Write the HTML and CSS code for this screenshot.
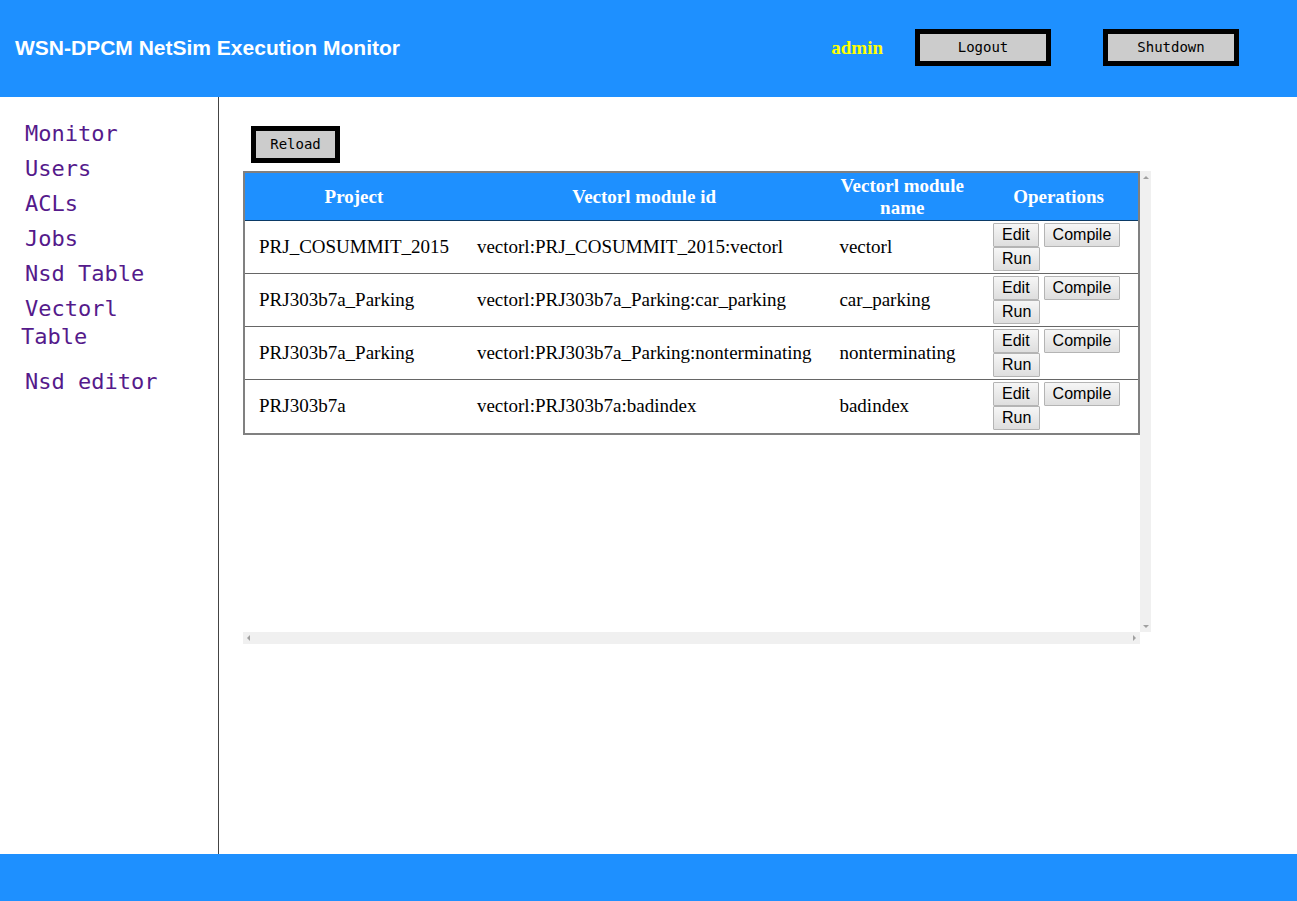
FILE: index.html
```html
<!DOCTYPE html>
<html lang="en">
<head>
<meta charset="utf-8">
<title>WSN-DPCM NetSim Execution Monitor</title>
<link rel="stylesheet" href="styles.css">
</head>
<body>
<header class="header">
  <h1 class="title">WSN-DPCM NetSim Execution Monitor</h1>
  <div class="account">
    <span class="user">admin</span>
    <button class="box-button wide" type="button">Logout</button>
    <button class="box-button wide" type="button">Shutdown</button>
  </div>
</header>
<div class="body">
  <nav class="sidebar">
    <ul class="menu">
      <li><a href="#monitor">Monitor</a></li>
      <li><a href="#users">Users</a></li>
      <li><a href="#acls">ACLs</a></li>
      <li><a href="#jobs">Jobs</a></li>
      <li><a href="#nsd">Nsd Table</a></li>
      <li><a href="#vectorl">Vectorl Table</a></li>
    </ul>
    <ul class="menu">
      <li><a href="#editor">Nsd editor</a></li>
    </ul>
  </nav>
  <main class="main">
    <button class="box-button reload" type="button">Reload</button>
    <div class="pane">
      <div class="pane-content">
        <table class="modules">
          <colgroup><col class="c-project"><col class="c-id"><col class="c-name"><col class="c-ops"></colgroup>
          <thead>
            <tr><th>Project</th><th>Vectorl module id</th><th>Vectorl module name</th><th>Operations</th></tr>
          </thead>
          <tbody>
            <tr>
              <td>PRJ_COSUMMIT_2015</td><td>vectorl:PRJ_COSUMMIT_2015:vectorl</td><td>vectorl</td>
              <td><div class="ops"><button type="button">Edit</button><button type="button">Compile</button><button type="button">Run</button></div></td>
            </tr>
            <tr>
              <td>PRJ303b7a_Parking</td><td>vectorl:PRJ303b7a_Parking:car_parking</td><td>car_parking</td>
              <td><div class="ops"><button type="button">Edit</button><button type="button">Compile</button><button type="button">Run</button></div></td>
            </tr>
            <tr>
              <td>PRJ303b7a_Parking</td><td>vectorl:PRJ303b7a_Parking:nonterminating</td><td>nonterminating</td>
              <td><div class="ops"><button type="button">Edit</button><button type="button">Compile</button><button type="button">Run</button></div></td>
            </tr>
            <tr>
              <td>PRJ303b7a</td><td>vectorl:PRJ303b7a:badindex</td><td>badindex</td>
              <td><div class="ops"><button type="button">Edit</button><button type="button">Compile</button><button type="button">Run</button></div></td>
            </tr>
          </tbody>
        </table>
      </div>
      <div class="bar bar-v" aria-hidden="true">
        <svg width="12" height="12" viewBox="0 0 12 12"><path d="M3 8h6L6 5z"/></svg>
        <svg width="12" height="12" viewBox="0 0 12 12"><path d="M3 5h6L6 8z"/></svg>
      </div>
      <div class="bar bar-h" aria-hidden="true">
        <svg width="12" height="12" viewBox="0 0 12 12"><path d="M7 3v6L4 6z"/></svg>
        <svg width="12" height="12" viewBox="0 0 12 12"><path d="M5 3v6l3-3z"/></svg>
      </div>
    </div>
  </main>
</div>
<footer class="footer"></footer>
</body>
</html>
```
FILE: styles.css
```css
* {
  box-sizing: border-box;
}

body {
  display: flex;
  flex-direction: column;
  min-height: 100vh;
  margin: 0;
  background: #fff;
  color: #000;
  font-family: "Liberation Serif", "Times New Roman", serif;
  font-size: 19px;
}

.header {
  display: flex;
  align-items: center;
  justify-content: space-between;
  min-height: 97px;
  padding: 0 58px 2px 15px;
  background: #1e90ff;
}

.title {
  margin: 0;
  color: #fff;
  font: bold 21px/26px "Liberation Sans", Arial, sans-serif;
}

.account {
  display: flex;
  align-items: center;
}

.user {
  margin-right: 32px;
  color: #ff0;
  font-weight: bold;
}

.box-button {
  height: 37px;
  padding: 0 0 2px;
  border: 5px solid #000;
  background: #ccc;
  color: #000;
  font: 14px/20px "DejaVu Sans Mono", monospace;
}

.wide {
  width: 136px;
}

.wide + .wide {
  margin-left: 52px;
}

.body {
  display: flex;
  flex: 1;
}

.sidebar {
  flex: none;
  width: 219px;
  padding: 23px 28px 0 21px;
  border-right: 1px solid #444;
  font: 22px/28px "DejaVu Sans Mono", monospace;
}

.menu {
  margin: 0 0 17px;
  padding: 0;
  list-style: none;
}

.menu li + li {
  margin-top: 7px;
}

.menu a {
  padding-left: 4px;
  color: #551a8b;
  text-decoration: none;
}

.main {
  flex: 1;
  padding: 29px 146px 0 24px;
}

.reload {
  display: block;
  width: 89px;
  margin: 0 0 8px 8px;
}

.pane {
  display: grid;
  grid-template-columns: 1fr 11px;
  grid-template-rows: 461px 12px;
}

.modules {
  width: 100%;
  border: 2px solid #808080;
  border-collapse: separate;
  border-spacing: 0;
  table-layout: fixed;
}

.c-project {
  width: 24.4%;
}

.c-id {
  width: 40.6%;
}

.c-name {
  width: 17.2%;
}

.c-ops {
  width: 17.8%;
}

.modules th {
  height: 48px;
  padding: 2px 14px 1px;
  border-bottom: 1px solid #0b3a66;
  background: #1e90ff;
  color: #fff;
  line-height: 22px;
}

.modules td {
  padding: 2px 14px;
  border-bottom: 1px solid #666;
  line-height: 22px;
}

.modules tbody tr:last-child td {
  border-bottom-color: transparent;
}

.ops {
  display: flex;
  flex-wrap: wrap;
  column-gap: 5px;
}

.ops button {
  height: 24px;
  padding: 0 8px;
  border: 1px solid #b4b4b4;
  border-radius: 1px;
  background: linear-gradient(#f6f6f6, #dedede);
  color: #000;
  font: 16px/20px "Liberation Sans", Arial, sans-serif;
}

.bar {
  display: flex;
  justify-content: space-between;
  background: #f0f0f0;
  fill: #a0a0a0;
}

.bar-v {
  flex-direction: column;
}

.footer {
  height: 47px;
  background: #1e90ff;
}
```
